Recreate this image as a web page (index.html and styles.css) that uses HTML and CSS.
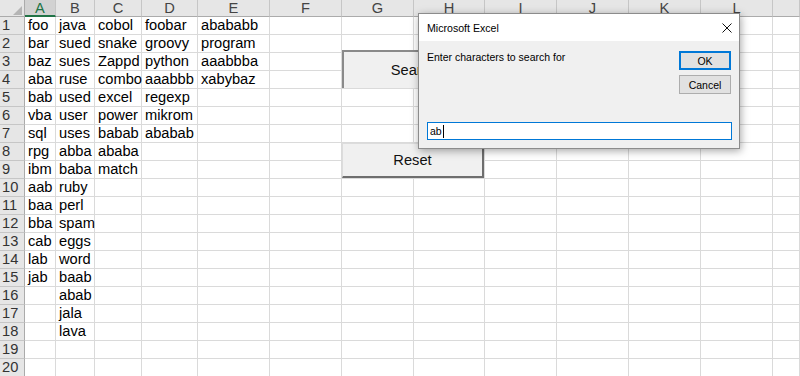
FILE: index.html
```html
<!DOCTYPE html>
<html lang="en">
<head>
    <meta charset="UTF-8">
    <title>Microsoft Excel - Search</title>
    <link rel="stylesheet" href="styles.css">
</head>
<body>
    <div class="sheet" id="sheet">
        <div class="corner"><span class="corner-tri"></span></div>
    </div>

    <!-- Form buttons placed on the sheet -->
    <div class="shape-btn search">Search</div>
    <div class="shape-btn reset">Reset</div>

    <!-- InputBox -->
    <div class="dialog">
        <div class="dialog-title">
            <span>Microsoft Excel</span>
            <svg class="close" width="10" height="10" viewBox="0 0 10 10">
                <path d="M0.5 0.5 L9.5 9.5 M9.5 0.5 L0.5 9.5" stroke="#111" stroke-width="1" fill="none"/>
            </svg>
        </div>
        <div class="dialog-body">
            <div class="prompt-row">
                <div class="prompt">Enter characters to search for</div>
                <div class="dialog-buttons">
                    <div class="dlg-btn default">OK</div>
                    <div class="dlg-btn">Cancel</div>
                </div>
            </div>
            <div class="text-input">ab<span class="caret"></span></div>
        </div>
    </div>

    <script>
        // last column (M) is only partly on screen, its letter falls outside the window
        const cols = ['A', 'B', 'C', 'D', 'E', 'F', 'G', 'H', 'I', 'J', 'K', 'L', ''];
        const data = {
            A: ['foo', 'bar', 'baz', 'aba', 'bab', 'vba', 'sql', 'rpg', 'ibm', 'aab', 'baa', 'bba', 'cab', 'lab', 'jab'],
            B: ['java', 'sued', 'sues', 'ruse', 'used', 'user', 'uses', 'abba', 'baba', 'ruby', 'perl', 'spam', 'eggs', 'word', 'baab', 'abab', 'jala', 'lava'],
            C: ['cobol', 'snake', 'Zappd', 'combo', 'excel', 'power', 'babab', 'ababa', 'match'],
            D: ['foobar', 'groovy', 'python', 'aaabbb', 'regexp', 'mikrom', 'ababab'],
            E: ['abababb', 'program', 'aaabbba', 'xabybaz']
        };

        const sheet = document.getElementById('sheet');

        function addCell(cls, text) {
            const el = document.createElement('div');
            el.className = cls;
            el.textContent = text || '';
            sheet.appendChild(el);
        }

        for (let c of cols) {
            addCell(c === 'A' ? 'col-head selected' : 'col-head', c);
        }

        for (let r = 0; r < 20; r++) {
            addCell('row-head', r + 1);
            for (let c of cols) {
                const list = data[c] || [];
                addCell('cell', list[r]);
            }
        }
    </script>
</body>
</html>
```

FILE: styles.css
```css
* {
    box-sizing: border-box;
    margin: 0;
    padding: 0;
}
body {
    font-family: 'Liberation Sans', Arial, sans-serif;
    background-color: #fff;
    color: #000;
    overflow: hidden;
    position: relative;
    width: 800px;
    height: 376px;
}
.sheet {
    display: grid;
    grid-template-columns: 25px 31px 39px 47px 56px 72px 72px 72px 71px 72px 72px 72px 72px 1fr;
    grid-template-rows: 17px repeat(20, 18px);
    font-size: 11pt;
}
.corner {
    background-color: #e6e6e6;
    border-right: 1px solid #ababab;
    border-bottom: 1px solid #ababab;
    position: relative;
}
.corner-tri {
    position: absolute;
    right: 2px;
    bottom: 1px;
    width: 0;
    height: 0;
    border-left: 9px solid transparent;
    border-bottom: 9px solid #b5b5b5;
}
.col-head {
    background-color: #e6e6e6;
    border-right: 1px solid #c6c6c6;
    border-bottom: 1px solid #ababab;
    color: #444;
    text-align: center;
    line-height: 16px;
}
.col-head.selected {
    background-color: #d2d2d2;
    color: #217346;
    border-bottom: 2px solid #217346;
}
.row-head {
    background-color: #e6e6e6;
    border-right: 1px solid #ababab;
    border-bottom: 1px solid #c6c6c6;
    color: #333;
    padding-left: 2px;
    line-height: 17px;
}
.cell {
    border-right: 1px solid #dadada;
    border-bottom: 1px solid #dadada;
    padding-left: 3px;
    line-height: 17px;
    white-space: nowrap;
}

.shape-btn {
    position: absolute;
    left: 342px;
    width: 142px;
    background-color: #f0f0f0;
    font-size: 11pt;
    color: #111;
    display: flex;
    align-items: center;
    justify-content: center;
}
.shape-btn.search {
    top: 50px;
    height: 38px;
    border-top: 2px solid #8a8a8a;
    border-left: 2px solid #8a8a8a;
}
.shape-btn.reset {
    top: 143px;
    height: 35px;
    border-top: 1px solid #dcdcdc;
    border-left: 1px solid #dcdcdc;
    border-right: 2px solid #6e6e6e;
    border-bottom: 2px solid #6e6e6e;
}

.dialog {
    position: absolute;
    left: 418px;
    top: 13px;
    width: 322px;
    height: 136px;
    border: 1px solid #8c8c8c;
    background-color: #f0f0f0;
    box-shadow: 1px 2px 8px rgba(0,0,0,0.35);
    display: flex;
    flex-direction: column;
    font-size: 10.5px;
}
.dialog-title {
    height: 27px;
    background-color: #fff;
    display: flex;
    align-items: center;
    justify-content: space-between;
    padding: 0 7px 0 8px;
    color: #000;
    font-size: 10.6px;
}
.dialog-body {
    flex: 1;
    display: flex;
    flex-direction: column;
    padding: 10px 7px 8px 8px;
}
.prompt-row {
    display: flex;
    justify-content: space-between;
    align-items: flex-start;
}
.prompt {
    line-height: 13px;
    color: #000;
}
.dialog-buttons {
    display: flex;
    flex-direction: column;
    gap: 5px;
    margin-right: 1px;
}
.dlg-btn {
    width: 52px;
    height: 19px;
    background-color: #e1e1e1;
    border: 1px solid #adadad;
    display: flex;
    align-items: center;
    justify-content: center;
    color: #000;
}
.dlg-btn.default {
    border: 2px solid #0078d7;
}
.text-input {
    margin-top: auto;
    height: 18px;
    background-color: #fff;
    border: 1px solid #0078d7;
    padding-left: 2px;
    line-height: 16px;
    display: flex;
    align-items: center;
}
.caret {
    display: inline-block;
    width: 1px;
    height: 13px;
    margin-left: 1px;
    background-color: #000;
}
```
